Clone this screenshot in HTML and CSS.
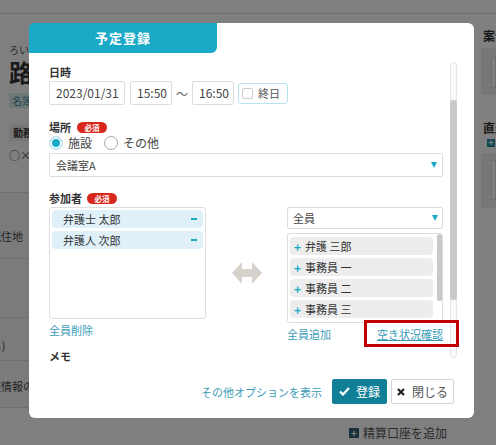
FILE: index.html
```html
<!DOCTYPE html>
<html lang="ja">
<head>
<meta charset="utf-8">
<title>予定登録</title>
<link rel="stylesheet" href="styles.css">
</head>
<body>
<div class="page">
  <div class="topbar"></div>
  <div class="page-body">
    <div class="left-col">
      <div class="bg-clip">
        <div class="ruby">ろいわ</div>
        <div class="title">路線</div>
        <div class="tag-teal">名簿</div>
        <div class="tag-grey">勤務</div>
        <div class="mark">○×</div>
        <div class="bg-table">
          <div class="bg-row r1"><span class="cut c1">現住地</span></div>
          <div class="bg-row r2"></div>
          <div class="bg-row r3"><span class="cut c2">(なし)</span></div>
          <div class="bg-row r4"><span class="cut c3">口座情報の</span></div>
        </div>
      </div>
      <div class="bg-add"><span class="plus-sq">+</span>精算口座を追加</div>
    </div>
    <div class="right-col">
      <div class="rc-title">案件</div>
      <div class="rc-box"><div class="rc-inner"></div></div>
      <div class="rc-title t2">直近</div>
      <div class="rc-plus">+</div>
      <div class="rc-box b2"><div class="rc-inner i2"></div></div>
    </div>
  </div>
</div>
<div class="overlay"></div>

<div class="modal">
  <div class="tab">予定登録</div>
  <div class="modal-body">
    <div class="form">
      <div class="label">日時</div>
      <div class="date-row">
        <div class="input w-date">2023/01/31</div>
        <div class="input w-time">15:50</div>
        <span class="tilde">〜</span>
        <div class="input w-time">16:50</div>
        <div class="allday"><span class="checkbox"></span>終日</div>
      </div>

      <div class="label mt-place">場所<span class="badge">必須</span></div>
      <div class="radios">
        <span class="radio on"></span><span class="radio-label">施設</span>
        <span class="radio"></span><span class="radio-label">その他</span>
      </div>
      <div class="select">会議室A<span class="caret"></span></div>

      <div class="label mt-member">参加者<span class="badge b-member">必須</span></div>
      <div class="members">
        <div class="m-left">
          <div class="listbox">
            <div class="chosen"><span>弁護士 太郎</span><span class="minus"></span></div>
            <div class="chosen"><span>弁護人 次郎</span><span class="minus"></span></div>
          </div>
          <a class="link del">全員削除</a>
        </div>
        <div class="m-mid">
          <svg class="swap" width="30" height="24" viewBox="0 0 30 24"><polygon points="0,12 10,1 10,8 20,8 20,1 30,12 20,23 20,16 10,16 10,23" fill="#d6d2cb"/></svg>
        </div>
        <div class="m-right">
          <div class="select sm">全員<span class="caret"></span></div>
          <div class="listbox2">
            <div class="cands">
              <div class="cand"><span class="plus">+</span>弁護 三郎</div>
              <div class="cand"><span class="plus">+</span>事務員 一</div>
              <div class="cand"><span class="plus">+</span>事務員 二</div>
              <div class="cand"><span class="plus">+</span>事務員 三</div>
            </div>
            <div class="mini-scroll"><div class="mini-thumb"></div></div>
          </div>
          <div class="links">
            <a class="link">全員追加</a>
            <a class="link check">空き状況確認</a>
          </div>
        </div>
      </div>

      <div class="label mt-memo">メモ</div>
      <div class="textarea"></div>
    </div>
    <div class="vscroll"><div class="vthumb"></div></div>
  </div>
  <div class="modal-foot">
    <a class="link opt">その他オプションを表示</a>
    <button class="btn primary"><svg width="11" height="9" viewBox="0 0 11 9"><path d="M1 4.5 L4 7.5 L10 1" fill="none" stroke="#fff" stroke-width="2.2"/></svg>登録</button>
    <button class="btn plain"><svg width="8" height="8" viewBox="0 0 8 8"><path d="M1 1 L7 7 M7 1 L1 7" stroke="#222" stroke-width="2.2"/></svg>閉じる</button>
  </div>
</div>
</body>
</html>
```
FILE: styles.css
```css
* { box-sizing: border-box; margin: 0; padding: 0; }
html, body { width: 496px; height: 445px; overflow: hidden; }
body {
  font-family: "Noto Sans CJK JP", "Noto Sans", sans-serif;
  font-size: 11px;
  color: #444;
  background: #fff;
  position: relative;
}

/* background page */
.page { width: 496px; height: 445px; }
.topbar { height: 14px; border-bottom: 1px solid #dcdcdc; background: #fff; }
.page-body { display: grid; grid-template-columns: 472px 24px; }
.left-col { padding-left: 9px; }
.bg-clip { margin-left: -9px; width: 29px; padding-left: 9px; overflow: hidden; }
.ruby { margin-top: 30px; font-size: 10px; line-height: 12px; color: #555; white-space: nowrap; }
.title { margin-top: 2px; font-size: 24px; line-height: 28px; font-weight: 700; color: #333; white-space: nowrap; }
.tag-teal { margin-top: 7px; width: 60px; height: 15px; background: #dceef0; color: #3a8c9c; font-size: 10px; line-height: 15px; padding-left: 3px; white-space: nowrap; }
.tag-grey { margin-top: 16px; width: 60px; height: 17px; background: #eee; color: #333; font-size: 10px; line-height: 17px; padding-left: 4px; font-weight: 700; white-space: nowrap; }
.mark { margin-top: 8px; font-size: 11px; line-height: 12px; color: #444; white-space: nowrap; }
.bg-table { margin-left: -9px; margin-top: 31px; background: #f6f6f6; width: 120px; }
.bg-row { border-top: 1px solid #ddd; }
.r1 { height: 66px; }
.r2 { height: 59px; }
.r3 { height: 43px; }
.r4 { height: 48px; border-bottom: 1px solid #ddd; }
.cut { display: block; font-size: 11px; line-height: 14px; color: #444; white-space: nowrap; }
.c1 { margin-left: -10px; padding-top: 36px; }
.c2 { margin-left: -24px; padding-top: 20px; }
.c3 { margin-left: -21px; padding-top: 18px; }
.bg-add { margin-top: 18px; padding-right: 25px; font-size: 12px; line-height: 14px; color: #555; display: flex; justify-content: flex-end; align-items: center; gap: 4px; }
.plus-sq { width: 10px; height: 10px; background: #2e5f70; color: #fff; font-size: 10px; line-height: 10px; font-weight: 700; text-align: center; }

.right-col { padding-left: 11px; overflow: hidden; }
.rc-title { margin-top: 15px; font-size: 12px; line-height: 14px; font-weight: 700; color: #333; white-space: nowrap; }
.rc-box { margin-top: 5px; margin-left: -2px; height: 47px; background: #eeeeee; padding: 9px 0 0 10px; }
.rc-inner { height: 31px; background: #fff; border: 1px solid #ddd; }
.t2 { margin-top: 26px; }
.rc-plus { margin-top: 4px; margin-left: 4px; width: 8px; height: 8px; background: #2b8da6; color: #fff; font-size: 9px; line-height: 8px; text-align: center; font-weight: 700; }
.b2 { margin-top: 6px; height: 55px; padding-top: 7px; }
.i2 { height: 40px; }

.overlay { position: fixed; inset: 0; background: rgba(0, 0, 0, 0.5); }

/* modal */
.modal {
  position: absolute;
  left: 29px; top: 23px;
  width: 445px; height: 395px;
  background: #fff;
  border-radius: 6px;
}
.tab {
  width: 188px; height: 30px;
  background: #1aaac8;
  color: #fff;
  font-size: 13px; font-weight: 700; letter-spacing: 1px;
  line-height: 30px; text-align: center;
  border-radius: 5px 0 6px 0;
}
.modal-body { height: 315px; overflow: hidden; display: flex; }
.form { width: 394px; margin-left: 20px; padding-top: 12px; }
.label { font-size: 11px; line-height: 14px; font-weight: 700; color: #333; display: flex; align-items: center; }
.mt-place { margin-top: 15px; }
.mt-member { margin-top: 14px; }
.mt-memo { margin-top: 8px; }
.badge {
  display: inline-block; width: 30px; height: 11px;
  border-radius: 6px; background: #d8281d; color: #fff;
  font-size: 7.5px; line-height: 11px; text-align: center; font-weight: 700;
  margin-left: 6px;
}
.b-member { margin-left: 5px; }

.date-row { margin-top: 2px; display: flex; align-items: center; gap: 4px; height: 24px; }
.input { height: 24px; border: 1px solid #ddd; border-radius: 2px; font-size: 12px; line-height: 22px; color: #444; padding-left: 6px; }
.w-date { width: 76px; margin-right: 1px; }
.w-time { width: 42px; }
.tilde { width: 12px; font-size: 12px; color: #666; text-align: center; }
.allday { height: 21px; width: 50px; border: 1px solid #b6e3ee; border-radius: 3px; display: flex; align-items: center; padding-left: 3px; gap: 5px; font-size: 11px; color: #555; }
.checkbox { width: 11px; height: 11px; border: 1px solid #ccc; border-radius: 2px; }

.radios { margin-top: 2px; height: 14px; display: flex; align-items: center; }
.radio { width: 14px; height: 14px; border-radius: 50%; border: 1px solid #aaa; }
.radio.on { background: #1ba9c8; border-color: #bfe6ef; box-shadow: inset 0 0 0 2px #fff; }
.radio-label { margin-left: 5px; margin-right: 12px; font-size: 12px; line-height: 14px; color: #444; }

.select { margin-top: 3px; height: 24px; border: 1px solid #ddd; border-radius: 2px; font-size: 11px; line-height: 22px; padding-left: 6px; color: #444; display: flex; justify-content: space-between; align-items: center; padding-right: 5px; }
.caret { width: 0; height: 0; border-left: 3.5px solid transparent; border-right: 3.5px solid transparent; border-top: 6px solid #1ba9c8; }
.select.sm { margin-top: 0; height: 22px; line-height: 20px; padding-left: 5px; padding-right: 4px; }

.members { margin-top: 2px; display: grid; grid-template-columns: 157px 81px 156px; align-items: start; }
.listbox { height: 112px; border: 1px solid #ddd; border-radius: 3px; padding: 2px; display: flex; flex-direction: column; gap: 3px; }
.chosen { height: 18px; background: #dff0f9; border-radius: 4px; display: flex; justify-content: space-between; align-items: center; padding: 0 6px 0 11px; font-size: 11px; color: #333; }
.minus { width: 6px; height: 2px; background: #1ba9c8; }
.link { display: inline-block; font-size: 11px; line-height: 14px; color: #3a9cb8; text-decoration: none; }
.del { margin-top: 4px; }
.m-mid { display: flex; justify-content: center; padding-top: 54px; }
.swap { display: block; margin-left: 1px; }

.listbox2 { margin-top: 4px; height: 90px; border: 1px solid #ddd; border-radius: 3px; display: flex; padding: 2px 0 2px 2px; }
.cands { width: 145px; display: flex; flex-direction: column; gap: 3px; padding-top: 1px; }
.cand { height: 18px; background: #ededed; border-radius: 4px; display: flex; align-items: center; padding-left: 4px; font-size: 11px; color: #333; }
.plus { color: #1ba9c8; font-weight: 700; font-size: 12px; width: 11px; }
.mini-scroll { margin-left: 4px; width: 5px; margin-top: -2px; }
.mini-thumb { height: 67px; background: #c9c9c9; border-radius: 3px; }
.links { margin-top: 4px; display: flex; justify-content: space-between; }
.check { text-decoration: underline; position: relative; }
.check::after {
  content: ""; position: absolute; z-index: 3;
  left: -13px; right: -16px; top: -7px; bottom: -6px;
  border: 3px solid #c00000;
}

.textarea { margin-top: 12px; height: 60px; border: 1px solid #ddd; border-radius: 2px; }

.vscroll { margin-left: 7px; margin-top: 9px; width: 7px; height: 296px; border: 1px solid #e6e6e6; border-radius: 4px; background: #fafafa; position: relative; }
.vthumb { margin-top: 37px; height: 200px; background: #c9c9c9; border-radius: 3px; margin-left: -1px; margin-right: -1px; }

.modal-foot { height: 50px; display: flex; justify-content: flex-end; align-items: center; padding: 11px 20px 14px 0; }
.opt { margin-right: 10px; }
.btn { height: 25px; border-radius: 2px; font-family: inherit; font-size: 12px; display: flex; align-items: center; justify-content: center; gap: 6px; }
.primary { width: 55px; background: #127f99; color: #fff; border: 1px solid #127f99; }
.plain { width: 63px; margin-left: 4px; background: #fff; color: #555; border: 1px solid #d5d5d5; gap: 7px; }
```
